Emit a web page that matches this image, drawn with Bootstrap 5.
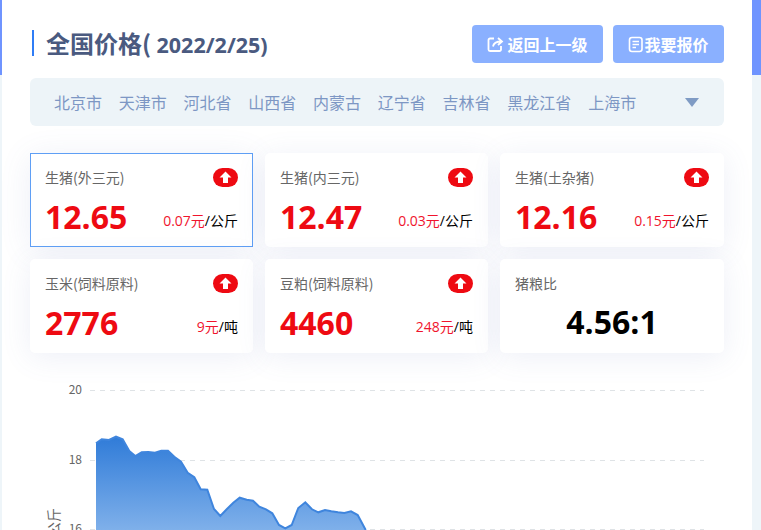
<!DOCTYPE html>
<html lang="zh-CN">
<head>
    <meta charset="UTF-8">
    <meta name="viewport" content="width=device-width, initial-scale=1.0">
    <title>全国价格</title>
    <link rel="stylesheet" href="https://cdn.jsdelivr.net/npm/bootstrap@5.3.0/dist/css/bootstrap.min.css">
    <style>
        html, body {
            height: 530px;
            overflow: hidden;
        }
        body {
            background: linear-gradient(#6f94ff 0, #6f94ff 75px, #eef5f9 75px);
            font-family: "Noto Sans CJK SC", sans-serif;
        }
        #panel {
            margin: 0 9px 0 2px;
            height: 530px;
            background: #fff;
            padding: 25px 28px 0 28px;
        }
        .price-title {
            color: #4a5a80;
            font-size: 24px;
            font-weight: 700;
            border-left: 2px solid #2f7df6;
            margin: 5px 0 0 2px;
            padding-left: 12px;
            line-height: 26px;
            height: 26px;
        }
        .price-title span {
            font-family: "Open Sans", sans-serif;
            font-size: 21.5px;
        }
        .head-row { height: 38px; }
        .head-btns { gap: 10px; }
        .head-btn {
            background: #8ab0ff;
            border: 0;
            border-radius: 4px;
            color: #fff;
            font-size: 16px;
            font-weight: 700;
            height: 38px;
            padding: 0;
            line-height: 38px;
        }
        .btn-back { width: 131px; gap: 3px; }
        .btn-quote { width: 111px; }
        #area-bar {
            background: #edf4f8;
            border-radius: 6px;
            height: 48px;
            margin-top: 15px;
            padding: 0 24px;
            color: #7d97c4;
            font-size: 16px;
        }
        #area-list { gap: 16.75px; }
        .area-arrow {
            width: 0;
            height: 0;
            border-left: 7.5px solid transparent;
            border-right: 7.5px solid transparent;
            border-top: 9px solid #7f9bc4;
            margin-left: auto;
            margin-right: 1px;
        }
        #price-grid {
            display: grid;
            grid-template-columns: 223px 223px 224px;
            gap: 12px;
            margin-top: 27px;
        }
        .price-card {
            height: 94px;
            background: #fff;
            border-radius: 5px;
            padding: 15px 15px 0 15px;
            box-shadow: 0 4px 30px rgba(90, 110, 180, .11);
        }
        .price-card.active {
            border: 1px solid #5f9ff5;
            border-radius: 0;
            padding: 14px 14px 0 14px;
        }
        .card-label {
            color: #666;
            font-size: 14px;
            line-height: 20px;
            height: 20px;
        }
        .label-row { margin-top: -1px; }
        .up-badge { display: block; }
        .value-row { margin-top: 8px; }
        .card-value {
            color: #ee0a12;
            font-family: "Open Sans", sans-serif;
            font-weight: 700;
            font-size: 32px;
            line-height: 44px;
        }
        .card-delta {
            font-family: "Open Sans", "Noto Sans CJK SC", sans-serif;
            font-size: 14px;
            color: #000;
            line-height: 20px;
            padding-bottom: 8px;
        }
        .card-delta b {
            font-weight: 400;
            color: #f0142d;
        }
        .ratio-value {
            color: #000;
            font-family: "Open Sans", sans-serif;
            font-weight: 700;
            font-size: 32px;
            line-height: 44px;
            text-align: center;
            margin-top: 7px;
        }
        #chart {
            display: block;
            position: absolute;
            left: 0;
            top: 0;
        }
        #chart text {
            font-family: "Noto Sans CJK SC", sans-serif;
            font-size: 12px;
            fill: #666;
        }
    </style>
</head>
<body>
    <div id="panel">
        <div class="head-row d-flex justify-content-between align-items-start">
            <div class="price-title">全国价格( <span id="price-date">2022/2/25)</span></div>
            <div class="head-btns d-flex ms-auto">
                <button class="head-btn btn-back d-flex justify-content-center align-items-center">
                    <svg width="17" height="17" viewBox="0 0 17 17" fill="none" stroke="#fff" stroke-width="1.8"><path d="M7 2.500H3a1.500 1.500 0 0 0-1.500 1.500v9.500A1.500 1.500 0 0 0 3 15h9.500a1.500 1.500 0 0 0 1.500-1.500V10"/><path d="M6 10.500c.5-3.500 3-5 8.500-5M11 2l4 3.500L11 9"/></svg>
                    <span>返回上一级</span>
                </button>
                <button class="head-btn btn-quote d-flex justify-content-center align-items-center">
                    <svg width="16" height="17" viewBox="0 0 16 17" fill="none" stroke="#fff" stroke-width="1.6"><rect x="1.500" y="1.500" width="12.500" height="14" rx="2.500"/><path d="M4.500 5.500h6.500M4.500 8.500h6.500M4.500 11.500h3.500"/></svg>
                    <span>我要报价</span>
                </button>
            </div>
        </div>

        <div id="area-bar" class="d-flex align-items-center">
            <div id="area-list" class="d-flex"></div>
            <div class="area-arrow"></div>
        </div>

        <div id="price-grid"></div>
    </div>

    <svg id="chart" width="761" height="530">
        <defs>
            <linearGradient id="area-fill" x1="0" y1="436" x2="0" y2="530" gradientUnits="userSpaceOnUse">
                <stop offset="0" stop-color="#2f7bd8"/>
                <stop offset="1" stop-color="#7fb0ea"/>
            </linearGradient>
        </defs>
        <g stroke="#dfe3e6" stroke-width="1" stroke-dasharray="5 5">
            <line x1="90" y1="390.500" x2="704" y2="390.500"/>
            <line x1="90" y1="460.500" x2="704" y2="460.500"/>
            <line x1="90" y1="529.500" x2="704" y2="529.500"/>
        </g>
        <text x="82" y="394" text-anchor="end">20</text>
        <text x="82" y="464" text-anchor="end">18</text>
        <text x="82" y="533" text-anchor="end">16</text>
        <text transform="translate(59 508) rotate(-90)" text-anchor="end" style="font-size:14px">公斤</text>
        <polygon id="chart-area" fill="url(#area-fill)"></polygon>
        <polyline id="chart-line" fill="none" stroke="#3f85dd" stroke-width="2"></polyline>
    </svg>

    <script>
        const areas = ["北京市", "天津市", "河北省", "山西省", "内蒙古", "辽宁省", "吉林省", "黑龙江省", "上海市"];
        document.getElementById("area-list").innerHTML = areas
            .map(a => `<div>${a}</div>`)
            .join("");

        const upBadge = `<svg class="up-badge" width="25" height="19" viewBox="0 0 25 19"><rect width="25" height="19" rx="9.500" fill="#ee0a12"/><path d="M12.500 3.500l6 6h-3.500V15h-5V9.500H6.500z" fill="#fff"/></svg>`;

        const prices = [
            { name: "生猪(外三元)", value: "12.65", delta: "0.07元", unit: "/公斤", active: true },
            { name: "生猪(内三元)", value: "12.47", delta: "0.03元", unit: "/公斤" },
            { name: "生猪(土杂猪)", value: "12.16", delta: "0.15元", unit: "/公斤" },
            { name: "玉米(饲料原料)", value: "2776", delta: "9元", unit: "/吨" },
            { name: "豆粕(饲料原料)", value: "4460", delta: "248元", unit: "/吨" }
        ];

        let cards = prices.map(p => `
            <div class="price-card ${p.active ? 'active' : ''}">
                <div class="label-row d-flex justify-content-between align-items-center">
                    <div class="card-label">${p.name}</div>
                    ${upBadge}
                </div>
                <div class="value-row d-flex justify-content-between align-items-end">
                    <div class="card-value">${p.value}</div>
                    <div class="card-delta"><b>${p.delta}</b>${p.unit}</div>
                </div>
            </div>`).join("");

        cards += `
            <div class="price-card">
                <div class="label-row card-label">猪粮比</div>
                <div class="ratio-value">4.56:1</div>
            </div>`;
        document.getElementById("price-grid").innerHTML = cards;

        const pts = [[96,443.3],[101.7,439.3],[109,440],[116,436.7],[122.7,439.3],[129.3,451],[135.3,456],[141.7,452.3],[148.3,452],[155,452.7],[161.3,450.7],[168,450.7],[174.3,456.7],[181,461.7],[187.7,472.7],[194.3,477.3],[200.7,489.3],[207.3,489.7],[214,509],[220.3,516],[226.7,509.3],[233.3,502.7],[239.7,497.7],[246.7,499.7],[253,500.7],[259.3,506.7],[266,509.3],[272.3,513.3],[279,525],[285.3,528.3],[291.7,525],[298.3,508],[305.3,502.3],[312,509.3],[318.3,512.3],[325,510],[331.3,511.3],[338,512.3],[344.3,513],[351,511.3],[357.7,515],[365.7,530]];
        const line = pts.map(p => p.join(",")).join(" ");
        document.getElementById("chart-line").setAttribute("points", line);
        document.getElementById("chart-area").setAttribute("points", line + " 96,530");
    </script>

    <script src="https://cdn.jsdelivr.net/npm/bootstrap@5.3.0/dist/js/bootstrap.bundle.min.js"></script>
</body>
</html>
